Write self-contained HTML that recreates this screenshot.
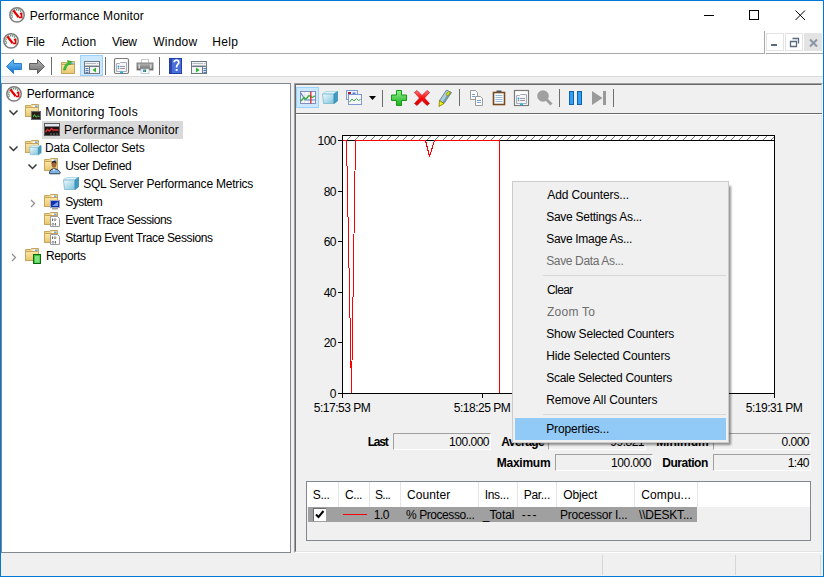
<!DOCTYPE html>
<html><head><meta charset="utf-8">
<style>
*{margin:0;padding:0;box-sizing:border-box}
html,body{width:824px;height:577px;overflow:hidden;background:#fff}
body{position:relative;font-family:"Liberation Sans",sans-serif;font-size:12px;color:#000}
.a{position:absolute}
.t{position:absolute;font-size:12px;line-height:14px;white-space:nowrap}
svg{position:absolute;overflow:visible}
.num{letter-spacing:-0.5px}
.dis{color:#6d6d6d}
.b{font-weight:bold}
.box{position:absolute;border-top:1px solid #a0a0a0;border-left:1px solid #a0a0a0;border-bottom:1px solid #fff;border-right:1px solid #fff;background:#f0f0f0}
.box span{position:absolute;right:1px;top:1px;line-height:14px;letter-spacing:-0.5px}
</style></head><body>
<!-- window border -->
<div class="a" style="left:0;top:0;width:824px;height:577px;border:1px solid #0078d7"></div>

<!-- TITLE BAR -->
<div class="t" style="letter-spacing:0.111px;left:29.68px;top:9px">Performance Monitor</div>
<div class="a" style="left:704px;top:15px;width:10px;height:1px;background:#000"></div>
<div class="a" style="left:749px;top:10px;width:10px;height:10px;border:1px solid #000"></div>
<svg style="left:795px;top:10px" width="11" height="11"><path d="M0.5 0.5L10 10M10 0.5L0.5 10" stroke="#000" stroke-width="1"/></svg>

<!-- MENU BAR -->
<div class="t" style="letter-spacing:-0.186px;left:26.2px;top:35px">File</div>
<div class="t" style="letter-spacing:0.208px;left:61.72px;top:35px">Action</div>
<div class="t" style="letter-spacing:-0.267px;left:112.0px;top:35px">View</div>
<div class="t" style="letter-spacing:0.272px;left:153.16px;top:35px">Window</div>
<div class="t" style="letter-spacing:0.373px;left:212.2px;top:35px">Help</div>
<div class="a" style="left:1px;top:53px;width:764px;height:1px;background:#a8a8a8"></div>
<div class="a" style="left:764px;top:31px;width:1px;height:23px;background:#a8a8a8"></div>
<div class="a" style="left:766px;top:53px;width:57px;height:1px;background:#a8a8a8"></div>
<div class="a" style="left:766px;top:33px;width:18px;height:18px;border:1px solid #e3e3e3;background:#fff"></div>
<div class="a" style="left:785px;top:33px;width:18px;height:18px;border:1px solid #e3e3e3;background:#fff"></div>
<div class="a" style="left:804px;top:33px;width:18px;height:18px;background:#e3e3e3"></div>

<!-- TOOLBAR -->
<div class="a" style="left:1px;top:76px;width:822px;height:1px;background:#dadada"></div>
<div class="a" style="left:1px;top:77px;width:822px;height:499px;background:#f0f0f0"></div>
<div class="a" style="left:80px;top:55px;width:23px;height:21px;background:#cce8ff;border:1px solid #99d1ff"></div>
<div class="a" style="left:51px;top:57px;width:1px;height:18px;background:#6d6d6d"></div>
<div class="a" style="left:105px;top:57px;width:1px;height:18px;background:#6d6d6d"></div>
<div class="a" style="left:159px;top:57px;width:1px;height:18px;background:#6d6d6d"></div>

<!-- TREE PANE -->
<div class="a" style="left:1px;top:83px;width:290px;height:470px;background:#fff;border:1px solid #828790"></div>
<div class="a" style="left:42px;top:121px;width:141px;height:18px;background:#d9d9d9"></div>
<div class="t" style="letter-spacing:-0.088px;left:26.68px;top:87px">Performance</div>
<div class="t" style="letter-spacing:0.352px;left:45.2px;top:105px">Monitoring Tools</div>
<div class="t" style="letter-spacing:0.142px;left:64.12px;top:123px">Performance Monitor</div>
<div class="t" style="letter-spacing:-0.204px;left:44.96px;top:141px">Data Collector Sets</div>
<div class="t" style="letter-spacing:-0.312px;left:65.16px;top:159px">User Defined</div>
<div class="t" style="letter-spacing:-0.21px;left:83.2px;top:177px">SQL Server Performance Metrics</div>
<div class="t" style="letter-spacing:-0.496px;left:65.16px;top:195px">System</div>
<div class="t" style="letter-spacing:-0.481px;left:65.16px;top:213px">Event Trace Sessions</div>
<div class="t" style="letter-spacing:-0.379px;left:65.16px;top:231px">Startup Event Trace Sessions</div>
<div class="t" style="letter-spacing:-0.32px;left:45.92px;top:249px">Reports</div>

<!-- RIGHT PANE -->
<div class="a" style="left:294px;top:83px;width:529px;height:470px;border-top:1px solid #a0a0a0;border-left:1px solid #a0a0a0;border-right:1px solid #fff;border-bottom:1px solid #fff"></div>
<div class="a" style="left:295px;top:84px;width:527px;height:468px;border-top:1px solid #696969;border-left:1px solid #696969;border-right:1px solid #e3e3e3;border-bottom:1px solid #e3e3e3"></div>
<div class="a" style="left:296px;top:113px;width:526px;height:1px;background:#696969"></div>
<div class="a" style="left:296px;top:114px;width:526px;height:1px;background:#fff"></div>
<div class="a" style="left:296px;top:87px;width:23px;height:21px;background:#cce8ff;border:1px solid #99d1ff"></div>

<!-- CHART -->
<div class="a" style="left:342px;top:135px;width:433px;height:259px;background:#fff;border:1px solid #000"></div>
<svg style="left:0;top:0" width="824" height="577">
<defs><pattern id="hp" x="3" y="136" width="8" height="4" patternUnits="userSpaceOnUse"><path d="M0 4L4 0" stroke="#555" stroke-width="0.8"/></pattern></defs>
<rect x="343" y="136" width="431" height="4" fill="url(#hp)"/>
<path d="M338 140.5H774 M338 191.5H342 M338 241.5H342 M338 292.5H342 M338 342.5H342 M338 393.5H342 M342.5 393V398 M482.5 393V398 M774.5 393V398" stroke="#000" stroke-width="1"/>
<path d="M343 140.5H346.5L351.5 393L355.5 140.5H425.5L429.5 156.5L434.5 140.5" stroke="#f00" stroke-width="1" fill="none" stroke-linejoin="bevel" shape-rendering="crispEdges"/>
<path d="M434 140.5H499.5V393" stroke="#f00" stroke-width="1" fill="none" shape-rendering="crispEdges"/>
</svg>
<div class="t num" style="left:296px;top:134px;width:40px;text-align:right">100</div>
<div class="t num" style="left:296px;top:185px;width:40px;text-align:right">80</div>
<div class="t num" style="left:296px;top:235px;width:40px;text-align:right">60</div>
<div class="t num" style="left:296px;top:286px;width:40px;text-align:right">40</div>
<div class="t num" style="left:296px;top:336px;width:40px;text-align:right">20</div>
<div class="t num" style="left:296px;top:387px;width:40px;text-align:right">0</div>
<div class="t num" style="left:302px;top:401px;width:80px;text-align:center">5:17:53 PM</div>
<div class="t num" style="left:442px;top:401px;width:80px;text-align:center">5:18:25 PM</div>
<div class="t num" style="left:734px;top:401px;width:80px;text-align:center">5:19:31 PM</div>

<!-- STATS -->
<div class="t b" style="letter-spacing:-1.2px;left:367.68px;top:435px">Last</div>
<div class="box" style="left:393px;top:433px;width:98px;height:17px"><span>100.000</span></div>
<div class="t b" style="letter-spacing:-0.547px;left:501.16px;top:435px">Average</div>
<div class="box" style="left:548px;top:433px;width:98px;height:17px"><span>99.821</span></div>
<div class="t b" style="letter-spacing:-0.039px;left:656.16px;top:435px">Minimum</div>
<div class="box" style="left:713px;top:433px;width:98px;height:17px"><span>0.000</span></div>
<div class="t b" style="letter-spacing:-0.24px;left:496.72px;top:456px">Maximum</div>
<div class="box" style="left:555px;top:454px;width:98px;height:17px"><span>100.000</span></div>
<div class="t b" style="letter-spacing:-0.457px;left:662.2px;top:456px">Duration</div>
<div class="box" style="left:713px;top:454px;width:98px;height:17px"><span>1:40</span></div>

<!-- TABLE -->
<div class="a" style="left:306px;top:481px;width:505px;height:60px;border:1px solid #828790;background:#f0f0f0"></div>
<div class="a" style="left:307px;top:482px;width:503px;height:25px;background:#fff"></div>
<div class="a" style="left:338px;top:482px;width:1px;height:25px;background:#e5e5e5"></div>
<div class="a" style="left:369px;top:482px;width:1px;height:25px;background:#e5e5e5"></div>
<div class="a" style="left:400px;top:482px;width:1px;height:25px;background:#e5e5e5"></div>
<div class="a" style="left:478px;top:482px;width:1px;height:25px;background:#e5e5e5"></div>
<div class="a" style="left:517px;top:482px;width:1px;height:25px;background:#e5e5e5"></div>
<div class="a" style="left:556px;top:482px;width:1px;height:25px;background:#e5e5e5"></div>
<div class="a" style="left:634px;top:482px;width:1px;height:25px;background:#e5e5e5"></div>
<div class="a" style="left:697px;top:482px;width:1px;height:25px;background:#e5e5e5"></div>
<div class="t" style="letter-spacing:-0.321px;left:312.72px;top:488px">S...</div>
<div class="t" style="letter-spacing:-0.426px;left:345.0px;top:488px">C...</div>
<div class="t" style="letter-spacing:-0.693px;left:375.04px;top:488px">S...</div>
<div class="t" style="letter-spacing:0.094px;left:406.92px;top:488px">Counter</div>
<div class="t" style="letter-spacing:-0.288px;left:484.68px;top:488px">Ins...</div>
<div class="t" style="letter-spacing:-0.288px;left:523.68px;top:488px">Par...</div>
<div class="t" style="letter-spacing:-0.112px;left:563.16px;top:488px">Object</div>
<div class="t" style="letter-spacing:0.138px;left:641.16px;top:488px">Compu...</div>
<div class="a" style="left:308px;top:507px;width:389px;height:15px;background:#a0a0a0"></div>
<div class="a" style="left:313px;top:508px;width:13px;height:13px;background:#fff;border-top:1px solid #6d6d6d;border-left:1px solid #6d6d6d"></div>
<svg style="left:313px;top:508px" width="13" height="13"><path d="M3 6.5L5.5 9L10.5 3" stroke="#000" stroke-width="2" fill="none"/></svg>
<div class="a" style="left:343px;top:514px;width:24px;height:1px;background:#f00"></div>
<div class="t" style="letter-spacing:-0.44px;left:373.72px;top:508px">1.0</div>
<div class="t" style="letter-spacing:-0.434px;left:406.0px;top:508px">% Processo...</div>
<div class="t" style="letter-spacing:-0.064px;left:482.84px;top:508px">_Total</div>
<div class="t" style="letter-spacing:1.36px;left:521.76px;top:508px">---</div>
<div class="t" style="letter-spacing:-0.239px;left:560.04px;top:508px">Processor I...</div>
<div class="t" style="letter-spacing:-0.204px;left:639.0px;top:508px">\\DESKT...</div>

<!-- STATUS BAR -->
<div class="a" style="left:602px;top:555px;width:1px;height:20px;background:#d7d7d7"></div>
<div class="a" style="left:735px;top:555px;width:1px;height:20px;background:#d7d7d7"></div>
<div class="a" style="left:820px;top:555px;width:1px;height:20px;background:#d7d7d7"></div>

<!-- ICONS -->
<svg style="left:0;top:0" width="824" height="577">
<defs>
<linearGradient id="gBlue" x1="0" y1="0" x2="0" y2="1"><stop offset="0" stop-color="#7cc8f8"/><stop offset="1" stop-color="#0a6fd0"/></linearGradient>
<linearGradient id="gGray" x1="0" y1="0" x2="0" y2="1"><stop offset="0" stop-color="#b8b8b8"/><stop offset="1" stop-color="#6a6a6a"/></linearGradient>
<linearGradient id="gFold" x1="0" y1="0" x2="0" y2="1"><stop offset="0" stop-color="#fbe6a8"/><stop offset="1" stop-color="#e9c66f"/></linearGradient>
<linearGradient id="gCube" x1="0" y1="0" x2="1" y2="1"><stop offset="0" stop-color="#f2fafd"/><stop offset="1" stop-color="#7cc3dc"/></linearGradient>
<linearGradient id="gPlus" x1="0" y1="0" x2="0" y2="1"><stop offset="0" stop-color="#8ef08e"/><stop offset="1" stop-color="#1cb01c"/></linearGradient>
<linearGradient id="gX" x1="0" y1="0" x2="0" y2="1"><stop offset="0" stop-color="#ff7a7a"/><stop offset="0.5" stop-color="#ff0a0a"/><stop offset="1" stop-color="#d00000"/></linearGradient>
<g id="pm">
 <circle cx="8" cy="7.9" r="7.2" fill="#fdfdfd" stroke="#7c7c7c" stroke-width="1.5"/>
 <path d="M3.4 10.6 A5.2 5.2 0 0 1 12.8 5.4" stroke="#4c7a5c" stroke-width="1.7" fill="none" stroke-dasharray="1.1 0.9"/>
 <path d="M4.3 3.4L9.7 10.3" stroke="#e80000" stroke-width="2.3"/>
 <path d="M10.8 6.7H12.6V10.5H10" stroke="#e00000" stroke-width="1.7" fill="none"/>
</g>
<g id="fold">
 <path d="M0.5 1.5H5.5L6.5 0.5H13.5V12.5H0.5Z" fill="#f0d48a" stroke="#c9a55c"/>
 <rect x="7.5" y="1.5" width="5" height="2" fill="#fff"/>
 <rect x="10" y="1.5" width="2.5" height="1.5" fill="#6aaee8"/>
 <path d="M0.5 3.5H13.5V12.5H0.5Z" fill="url(#gFold)" stroke="#c9a55c"/>
</g>
<g id="cube">
 <path d="M0.5 3L4 0.5H15.5L12 3Z" fill="#e6f5fb" stroke="#9fd0e2" stroke-width="0.8"/>
 <path d="M0.5 3H12V12.5H1.5Z" fill="url(#gCube)" stroke="#7ab8d0" stroke-width="0.8"/>
 <path d="M12 3L15.5 0.5V10L12 12.5Z" fill="#3f9bc0" stroke="#3a8fb5" stroke-width="0.8"/>
</g>
<g id="wnd">
 <rect x="0.5" y="0.5" width="15" height="12" fill="#f4f4f4" stroke="#707a86"/>
 <path d="M1.5 2.5H12M13 2.5H14.5M1.5 4.5H14.5" stroke="#b4bcc6" stroke-width="1"/>
 <path d="M1 5.5H15" stroke="#707a86"/>
</g>
</defs>

<!-- title/menu/tree perf icons -->
<use href="#pm" x="9" y="7"/>
<use href="#pm" x="3" y="33"/>
<use href="#pm" x="6" y="86"/>

<!-- main toolbar -->
<path d="M6.5 66.5L13.5 59.5V63.5H21.5V69.5H13.5V73.5Z" fill="url(#gBlue)" stroke="#2f7fcf" stroke-width="1" stroke-linejoin="round"/>
<path d="M44.5 66.5L37.5 59.5V63.5H29.5V69.5H37.5V73.5Z" fill="url(#gGray)" stroke="#5e5e5e" stroke-width="1" stroke-linejoin="round"/>
<use href="#fold" x="61" y="61"/>
<path d="M63.5 70C64 66 66 63.5 68.5 62.5L67.5 60.5L71.5 61.5L70 65L69.5 63.8C67.5 65 66 67.5 65.5 70Z" fill="#3cc23c" stroke="#1f9a1f" stroke-width="0.6"/>
<use href="#wnd" x="84" y="61"/>
<path d="M5.5 68V73" stroke="#707a86" transform="translate(84,61)"/>
<rect x="85.5" y="68" width="3" height="1.2" fill="#4a7fc0"/><rect x="85.5" y="70" width="3" height="1.2" fill="#4a7fc0"/><rect x="85.5" y="72" width="3" height="1.2" fill="#4a7fc0"/>
<path d="M89.5 67V73.5" stroke="#707a86"/>
<path d="M96 67.5V72.5L92.5 70Z" fill="#30b030"/>
<!-- properties -->
<rect x="114.5" y="58.5" width="14" height="15" rx="1.5" fill="#fff" stroke="#7a7a7a" stroke-width="1.2"/>
<path d="M116.5 63.5H119.5L120.5 62.5H126.5V71.5H116.5Z" fill="#f4f4f8" stroke="#a8acb8"/>
<circle cx="118.5" cy="66.5" r="0.9" fill="#1aa0f0"/><circle cx="118.5" cy="68.5" r="0.8" fill="#888"/>
<path d="M120 66.5H125M120 68.5H125" stroke="#9a9a9a"/>
<rect x="120" y="71.5" width="3" height="1.5" fill="#20b8f0"/>
<!-- printer -->
<rect x="141.5" y="59.5" width="7" height="4" fill="#fff" stroke="#c8c8c8"/>
<rect x="137" y="63" width="16" height="7" fill="url(#gGray)" stroke="#6a6a6a" stroke-width="0.8"/>
<rect x="138.5" y="64.5" width="1.5" height="4" fill="#d8d8d8"/><rect x="150" y="64.5" width="1.5" height="4" fill="#d8d8d8"/>
<rect x="141" y="69" width="8" height="4.5" fill="#fff" stroke="#b0c0d0" stroke-width="0.8"/>
<rect x="143" y="69.5" width="1.5" height="2.5" fill="#3a8ae0"/><rect x="144.5" y="69.5" width="1.5" height="2.5" fill="#208040"/>
<!-- help -->
<rect x="169" y="58" width="13" height="16" fill="#4a6fd8"/>
<rect x="169" y="58" width="3" height="16" fill="#2a48b0"/>
<rect x="169.5" y="58.5" width="12" height="15" fill="none" stroke="#2040a8"/>
<path d="M173.8 62.3C174.3 60.8 175.3 60.2 176.4 60.2C177.9 60.2 178.8 61.2 178.8 62.4C178.8 64.2 176.6 64.6 176.6 66.8V67.5" stroke="#fff" stroke-width="1.7" fill="none"/>
<rect x="175.7" y="69" width="1.9" height="1.9" fill="#fff"/>
<!-- window play -->
<use href="#wnd" x="191" y="61"/>
<path d="M202.5 67V73.5" stroke="#707a86"/>
<rect x="203.5" y="68" width="3" height="1.2" fill="#4a7fc0"/><rect x="203.5" y="70" width="3" height="1.2" fill="#4a7fc0"/><rect x="203.5" y="72" width="3" height="1.2" fill="#4a7fc0"/>
<path d="M196 67.5V72.5L199.5 70Z" fill="#30b030"/>

<!-- tree icons -->
<path d="M9.5 110.5L13.5 114.5L17.5 110.5" stroke="#353535" stroke-width="1.5" fill="none"/>
<use href="#fold" x="25" y="104"/>
<rect x="31.5" y="111.5" width="9" height="8" fill="#2a1e1e" stroke="#6a6a72"/>
<path d="M33 117L34.5 114.5L36 117.2L37.5 116L39.5 116.5" stroke="#40d040" stroke-width="1" fill="none"/>
<!-- perfmon monitor icon -->
<rect x="44.5" y="123.5" width="15" height="12" fill="#1e1616" stroke="#5a5a5a"/>
<rect x="45" y="124" width="14" height="2.5" fill="#e4e8f0"/>
<path d="M45.5 132L47.5 129.5L49.5 131L51.5 128.5L53 130H58.5" stroke="#e03030" stroke-width="1.3" fill="none"/>
<path d="M50 134H52M53 134H55M56 134H58" stroke="#888" stroke-width="0.8"/>
<!-- DCS -->
<path d="M9.5 146.5L13.5 150.5L17.5 146.5" stroke="#353535" stroke-width="1.5" fill="none"/>
<use href="#fold" x="25" y="140"/>
<use href="#cube" x="29" y="145" transform="translate(29,145) scale(0.78) translate(-29,-145)"/>
<!-- User defined -->
<path d="M28.5 164.5L32.5 168.5L36.5 164.5" stroke="#353535" stroke-width="1.5" fill="none"/>
<use href="#fold" x="44" y="158"/>
<path d="M49.5 173.5C49.5 170.5 51 168.8 54 168.8C57 168.8 58.5 170 59.5 171.5C60.5 172 60.5 173.5 59.5 173.8H50Z" fill="#7fb2e0" stroke="#1e2a3a" stroke-width="0.9"/>
<path d="M53 169L54 171.5L55 169Z" fill="#fff"/>
<ellipse cx="54" cy="164.8" rx="2.4" ry="3" fill="#a0683a"/>
<path d="M51.5 164.5C51.3 162 52.5 160.8 54 160.8C55.8 160.8 56.8 162 56.5 164.5C56 163 55 162.5 54 162.5C53 162.5 52 163 51.5 164.5Z" fill="#2a2220"/>
<!-- SQL cube -->
<use href="#cube" x="63" y="177"/>
<!-- System -->
<path d="M31 200L34.5 203.5L31 207" stroke="#909090" stroke-width="1.3" fill="none"/>
<use href="#fold" x="44" y="194"/>
<rect x="50.5" y="200.5" width="9" height="7" fill="#1030b0" stroke="#a0a8c0"/>
<path d="M52 206L58 201.5V206Z" fill="#7aa0f0"/>
<rect x="52" y="208" width="6" height="1.5" fill="#a0a0a0"/>
<!-- ETS / SETS -->
<use href="#fold" x="44" y="212"/>
<path d="M50.5 216.5H57.5L59.5 218.5V226.5H50.5Z" fill="#fff" stroke="#9a9a9a"/>
<path d="M52.5 218.5V221M55.5 223V225.5" stroke="#707070"/>
<circle cx="55" cy="219.7" r="1" fill="none" stroke="#707070" stroke-width="0.8"/><circle cx="53" cy="224.3" r="1" fill="none" stroke="#707070" stroke-width="0.8"/>
<use href="#fold" x="44" y="230"/>
<path d="M50.5 234.5H57.5L59.5 236.5V244.5H50.5Z" fill="#fff" stroke="#9a9a9a"/>
<path d="M52.5 236.5V239M55.5 241V243.5" stroke="#707070"/>
<circle cx="55" cy="237.7" r="1" fill="none" stroke="#707070" stroke-width="0.8"/><circle cx="53" cy="242.3" r="1" fill="none" stroke="#707070" stroke-width="0.8"/>
<!-- Reports -->
<path d="M12 254L15.5 257.5L12 261" stroke="#909090" stroke-width="1.3" fill="none"/>
<use href="#fold" x="25" y="248"/>
<rect x="33.5" y="254.5" width="7" height="9" fill="#3cc83c" stroke="#0a6a0a"/>
<rect x="35" y="256" width="4.5" height="6.5" fill="#7ee07e"/>

<!-- perfmon pane toolbar -->
<rect x="300.5" y="91.5" width="15" height="12" fill="#f6f8fc" stroke="#7f8fc0"/>
<path d="M301 95.5H315M301 99.5H315M304.5 92V103M308.5 92V103" stroke="#dde3ee" stroke-width="0.8"/>
<path d="M301 93L305 100H315" stroke="#6080d0" stroke-width="1.1" fill="none"/>
<path d="M301 101L304 97.5L306 99L309 95.5L312 97.5L315 96" stroke="#30b030" stroke-width="1.3" fill="none"/>
<path d="M310.8 91.5V103.5" stroke="#e02020" stroke-width="1.3"/>
<use href="#cube" x="322" y="91"/>
<rect x="346.5" y="90.5" width="11" height="9" fill="#f0f4fa" stroke="#7f9ad0"/>
<rect x="348" y="92" width="3" height="2" fill="#b02030"/><rect x="352.5" y="92.5" width="3" height="1.5" fill="#4a7ad8"/>
<rect x="348.5" y="94.5" width="13" height="10" fill="#f4f6fa" stroke="#7f9ad0"/>
<path d="M349.5 102L352 99L354 101L356.5 98.5L358.5 100.5L360.5 99.5" stroke="#40a840" stroke-width="1" fill="none"/>
<path d="M369 96H376L372.5 100Z" fill="#000"/>
<path d="M382.5 90V107" stroke="#6d6d6d"/>
<path d="M396.5 90.5H401.5V95H406.5V100.5H401.5V105.5H396.5V100.5H391.5V95H396.5Z" fill="url(#gPlus)" stroke="#129a12" stroke-width="1"/>
<path d="M414.5 92.5L417 90.5L422 95.5L427 90.5L429.5 92.5L424.5 98L429.5 103.5L427 105.5L422 100.5L417 105.5L414.5 103.5L419.5 98Z" fill="url(#gX)" stroke="#c01020" stroke-width="0.7"/>
<path d="M446.5 90L451.5 92.5L444 103.5L439.5 100.5Z" fill="#a9ccd6" stroke="#557a88" stroke-width="0.8"/>
<path d="M449.5 91.5L451.5 92.5L444 103.5L442.5 102.5Z" fill="#6f9aa8"/>
<ellipse cx="448.2" cy="93.6" rx="1.3" ry="2.3" transform="rotate(35 448.2 93.6)" fill="#e6e000" stroke="#7a7600" stroke-width="0.5"/>
<path d="M439.5 100.5L444 103.5L439 106.5Z" fill="#f2f000" stroke="#6e6a00" stroke-width="0.7"/>
<path d="M459.5 89V106" stroke="#6d6d6d"/>
<!-- copy -->
<path d="M470.5 90.5H475.5L477.5 92.5V99.5H470.5Z" fill="#fff" stroke="#9a9a9a"/>
<path d="M472 94.5H475M472 96.5H475" stroke="#4a8ad0" stroke-width="0.8"/>
<path d="M475.5 96.5H480.5L482.5 98.5V105.5H475.5Z" fill="#fff" stroke="#9a9a9a"/>
<path d="M477 100.5H481M477 102.5H481" stroke="#4a8ad0" stroke-width="0.8"/>
<!-- clipboard -->
<rect x="493.5" y="92.5" width="11" height="12" fill="#fff" stroke="#7a4a1e" stroke-width="1.6"/>
<rect x="496.5" y="90.5" width="5" height="2" fill="#555"/>
<path d="M495.5 95.5H502.5M495.5 97.5H502.5M495.5 99.5H502.5M495.5 101.5H502.5" stroke="#7aaad0" stroke-width="0.8"/>
<!-- properties 2 -->
<rect x="514.5" y="90.5" width="14" height="15" fill="#fff" stroke="#7a7a7a" stroke-width="1.2"/>
<path d="M516.5 95.5H519.5L520.5 94.5H526.5V103.5H516.5Z" fill="#f4f4f8" stroke="#a8acb8"/>
<circle cx="518.5" cy="98.5" r="0.9" fill="#1aa0f0"/><circle cx="518.5" cy="100.5" r="0.8" fill="#888"/>
<path d="M520 98.5H525M520 100.5H525" stroke="#9a9a9a"/>
<rect x="520" y="103.5" width="3" height="1.5" fill="#20b8f0"/>
<!-- magnifier -->
<circle cx="543" cy="96" r="5.8" fill="#a0a0a0"/>
<path d="M546.5 99.5L551.5 104.5" stroke="#a0a0a0" stroke-width="3"/>
<path d="M559.5 89V107" stroke="#6d6d6d"/>
<rect x="569.5" y="91.5" width="4" height="13" fill="#30a0f0" stroke="#1060b0"/>
<rect x="577.5" y="91.5" width="4" height="13" fill="#30a0f0" stroke="#1060b0"/>
<path d="M592 91L602.5 98L592 105Z" fill="#9a9a9a"/>
<rect x="603" y="91" width="3" height="14" fill="#9a9a9a"/>
<path d="M613.5 89V107" stroke="#6d6d6d"/>

<!-- mdi buttons glyphs -->
<rect x="771" y="44" width="6" height="2" fill="#5a6a7e"/>
<path d="M792.5 38.5H798.5V43.5M790.5 41.5H796.5V46.5H790.5Z" stroke="#5a6a7e" stroke-width="1.3" fill="none"/>
<path d="M810 39.5L817 46.5M817 39.5L810 46.5" stroke="#8a96a6" stroke-width="2"/>
</svg>

<!-- CONTEXT MENU -->
<div class="a" style="left:514px;top:186px;width:217px;height:259px;background:rgba(0,0,0,0.42);filter:blur(1.2px)"></div>
<div class="a" style="left:512px;top:181px;width:217px;height:262px;background:#f0f0f0;border:1px solid #cccccc"></div>
<div class="a" style="left:515px;top:418px;width:211px;height:22px;background:#91c9f7"></div>
<div class="a" style="left:543px;top:275px;width:183px;height:1px;background:#d7d7d7"></div>
<div class="a" style="left:543px;top:414px;width:183px;height:1px;background:#d7d7d7"></div>
<div class="t" style="letter-spacing:-0.108px;left:547.24px;top:188px">Add Counters...</div>
<div class="t" style="letter-spacing:-0.266px;left:546.2px;top:210px">Save Settings As...</div>
<div class="t" style="letter-spacing:-0.309px;left:546.2px;top:232px">Save Image As...</div>
<div class="t dis" style="letter-spacing:-0.355px;left:546.2px;top:254px">Save Data As...</div>
<div class="t" style="letter-spacing:-0.58px;left:547.0px;top:283px">Clear</div>
<div class="t dis" style="letter-spacing:0.24px;left:547.0px;top:305px">Zoom To</div>
<div class="t" style="letter-spacing:-0.19px;left:546.2px;top:327px">Show Selected Counters</div>
<div class="t" style="letter-spacing:-0.126px;left:546.2px;top:349px">Hide Selected Counters</div>
<div class="t" style="letter-spacing:-0.276px;left:546.2px;top:371px">Scale Selected Counters</div>
<div class="t" style="letter-spacing:-0.084px;left:546.2px;top:393px">Remove All Counters</div>
<div class="t" style="letter-spacing:-0.127px;left:546.2px;top:422px">Properties...</div>

</body></html>
